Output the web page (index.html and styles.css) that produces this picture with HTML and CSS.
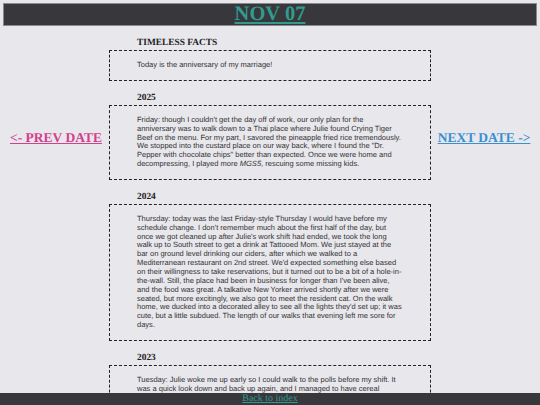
FILE: index.html
```html
<!DOCTYPE html>
<html lang="en">
<head>
<meta charset="utf-8">
<title>Nov 07</title>
<link rel="stylesheet" href="styles.css">
</head>
<body>
<header class="top-bar">
  <a class="day-title" href="#">NOV 07</a>
</header>
<div class="layout">
  <nav class="side side-prev">
    <a class="date-link prev-link" href="#">&lt;- PREV DATE</a>
  </nav>
  <main class="entries">
    <section class="entry">
      <h3 class="entry-year">TIMELESS FACTS</h3>
      <div class="entry-box">
        <p>Today is the anniversary of my marriage!</p>
      </div>
    </section>
    <section class="entry">
      <h3 class="entry-year">2025</h3>
      <div class="entry-box">
        <p>Friday: though I couldn't get the day off of work, our only plan for the anniversary was to walk down to a Thai place where Julie found Crying Tiger Beef on the menu. For my part, I savored the pineapple fried rice tremendously. We stopped into the custard place on our way back, where I found the "Dr. Pepper with chocolate chips" better than expected. Once we were home and decompressing, I played more <em>MGS5</em>, rescuing some missing kids.</p>
      </div>
    </section>
    <section class="entry">
      <h3 class="entry-year">2024</h3>
      <div class="entry-box">
        <p>Thursday: today was the last Friday-style Thursday I would have before my schedule change. I don't remember much about the first half of the day, but once we got cleaned up after Julie's work shift had ended, we took the long walk up to South street to get a drink at Tattooed Mom. We just stayed at the bar on ground level drinking our ciders, after which we walked to a Mediterranean restaurant on 2nd street. We'd expected something else based on their willingness to take reservations, but it turned out to be a bit of a hole-in-the-wall. Still, the place had been in business for longer than I've been alive, and the food was great. A talkative New Yorker arrived shortly after we were seated, but more excitingly, we also got to meet the resident cat. On the walk home, we ducked into a decorated alley to see all the lights they'd set up; it was cute, but a little subdued. The length of our walks that evening left me sore for days.</p>
      </div>
    </section>
    <section class="entry">
      <h3 class="entry-year">2023</h3>
      <div class="entry-box">
        <p>Tuesday: Julie woke me up early so I could walk to the polls before my shift. It was a quick look down and back up again, and I managed to have cereal together before heading out the door. Work was quiet for most of the afternoon, and by the evening we were both glued to the results as they trickled in.</p>
      </div>
    </section>
  </main>
  <nav class="side side-next">
    <a class="date-link next-link" href="#">NEXT DATE -&gt;</a>
  </nav>
</div>
<footer class="bottom-bar">
  <a class="index-link" href="#">Back to index</a>
</footer>
</body>
</html>
```
FILE: styles.css
```css
html, body {
  margin: 0;
  padding: 0;
}

body {
  background: #e8e7ec;
  padding: 3px 3px 40px;
  font-family: "Liberation Sans", Arial, sans-serif;
  font-size: 7.53px;
  color: #333333;
  text-rendering: geometricPrecision;
}

.top-bar {
  background: #38373c;
  border: 1px solid #8a898e;
  height: 21px;
  line-height: 21px;
  text-align: center;
}

.day-title {
  font-family: "Liberation Serif", "Times New Roman", serif;
  font-weight: bold;
  font-size: 20.5px;
  color: #2f9c8e;
}

.layout {
  display: grid;
  grid-template-columns: 1fr 322px 1fr;
}

.side {
  display: flex;
  justify-content: center;
  align-items: flex-start;
  padding-top: 104px;
}

.date-link {
  font-family: "Liberation Serif", "Times New Roman", serif;
  font-weight: bold;
  font-size: 13.5px;
  line-height: 15px;
}

.prev-link {
  color: #d2418c;
}

.next-link {
  color: #3a8fd1;
}

.entries {
  padding-top: 12px;
}

.entry-year {
  font-family: "Liberation Serif", "Times New Roman", serif;
  font-weight: bold;
  font-size: 9.4px;
  line-height: 10px;
  color: #222222;
  margin: 0 0 2px 28px;
}

.entry + .entry .entry-year {
  margin-top: 12px;
}

.entry-box {
  border: 1px dashed #222222;
  padding: 10px 27px;
}

.entry-box p {
  margin: 0;
  line-height: 8.85px;
}

.bottom-bar {
  position: fixed;
  left: 0;
  right: 0;
  bottom: 0;
  height: 12px;
  line-height: 11px;
  background: #38373c;
  text-align: center;
}

.index-link {
  font-family: "Liberation Serif", "Times New Roman", serif;
  font-size: 10px;
  color: #2f9c8e;
}
```
